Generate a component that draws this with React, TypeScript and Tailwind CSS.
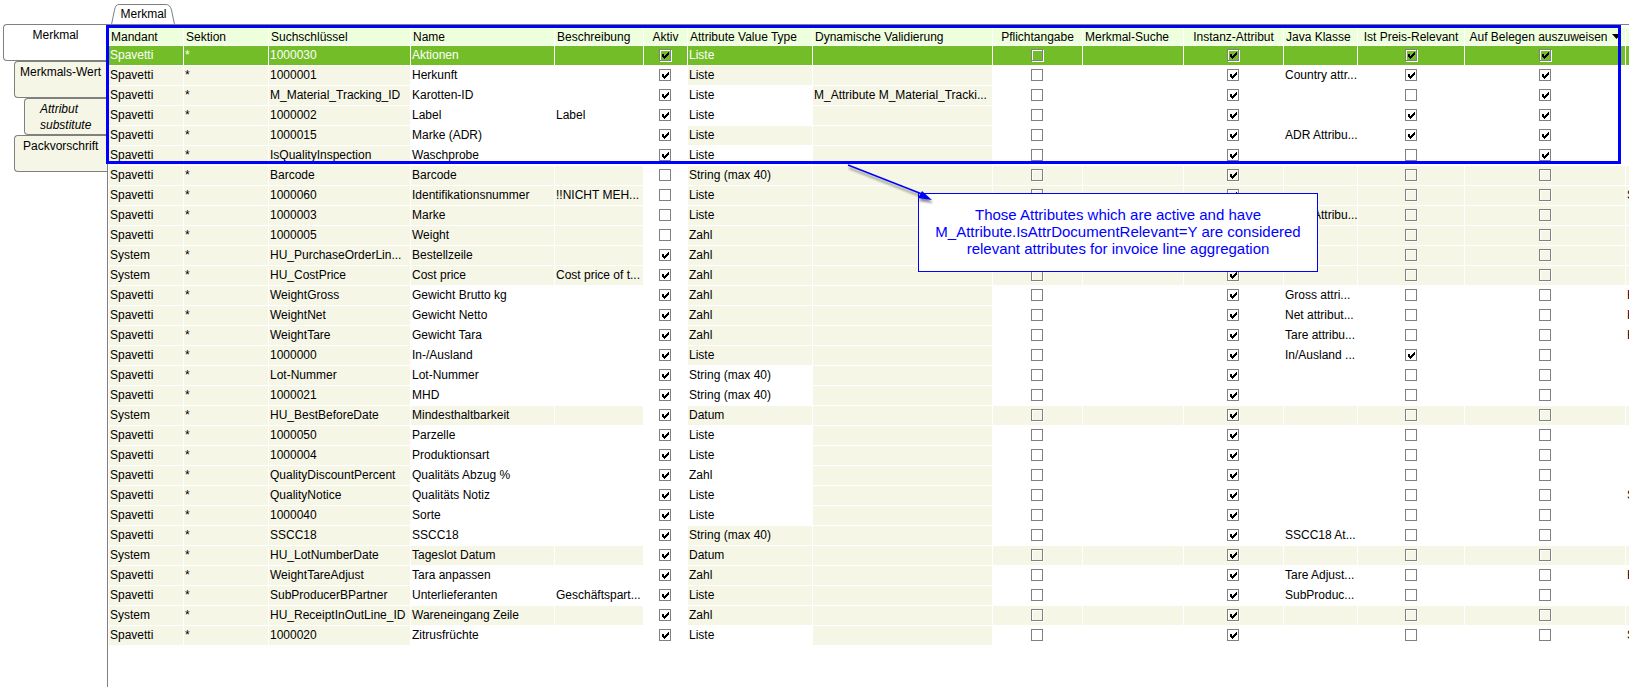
import React from "react";

type Kind = "text" | "check";

interface Column {
  title: string;
  width: string;
  kind: Kind;
  sorted?: boolean;
}

const COLUMNS: Column[] = [
  { title: "Mandant", width: "w-[75px]", kind: "text" },
  { title: "Sektion", width: "w-[85px]", kind: "text" },
  { title: "Suchschlüssel", width: "w-[142px]", kind: "text" },
  { title: "Name", width: "w-[144px]", kind: "text" },
  { title: "Beschreibung", width: "w-[89px]", kind: "text" },
  { title: "Aktiv", width: "w-[44px]", kind: "check" },
  { title: "Attribute Value Type", width: "w-[125px]", kind: "text" },
  { title: "Dynamische Validierung", width: "w-[180px]", kind: "text" },
  { title: "Pflichtangabe", width: "w-[90px]", kind: "check" },
  { title: "Merkmal-Suche", width: "w-[101px]", kind: "text" },
  { title: "Instanz-Attribut", width: "w-[100px]", kind: "check" },
  { title: "Java Klasse", width: "w-[74px]", kind: "text" },
  { title: "Ist Preis-Relevant", width: "w-[107px]", kind: "check" },
  { title: "Auf Belegen auszuweisen", width: "w-[161px]", kind: "check", sorted: true },
  { title: "", width: "w-[75px]", kind: "text" },
];

interface Row {
  client: string;
  key: string;
  name: string;
  type: string;
  desc?: string;
  inactive?: boolean;
  typeOpen?: boolean;
  rule?: string;
  java?: string;
  price?: boolean;
  doc?: boolean;
  unit?: string;
}

const SP = "Spavetti";
const SY = "System";

const ROWS: Row[] = [
  { client: SP, key: "1000030", name: "Aktionen", type: "Liste", price: true, doc: true },
  { client: SP, key: "1000001", name: "Herkunft", type: "Liste", java: "Country attr...", price: true, doc: true },
  { client: SP, key: "M_Material_Tracking_ID", name: "Karotten-ID", type: "Liste", typeOpen: true, rule: "M_Attribute M_Material_Tracki...", doc: true },
  { client: SP, key: "1000002", name: "Label", type: "Liste", typeOpen: true, desc: "Label", price: true, doc: true },
  { client: SP, key: "1000015", name: "Marke (ADR)", type: "Liste", java: "ADR Attribu...", price: true, doc: true },
  { client: SP, key: "IsQualityInspection", name: "Waschprobe", type: "Liste", typeOpen: true, doc: true },
  { client: SP, key: "Barcode", name: "Barcode", type: "String (max 40)", inactive: true },
  { client: SP, key: "1000060", name: "Identifikationsnummer", type: "Liste", desc: "!!NICHT MEH...", inactive: true, unit: "S" },
  { client: SP, key: "1000003", name: "Marke", type: "Liste", java: "ADR Attribu...", inactive: true },
  { client: SP, key: "1000005", name: "Weight", type: "Zahl", inactive: true },
  { client: SY, key: "HU_PurchaseOrderLin...", name: "Bestellzeile", type: "Zahl" },
  { client: SY, key: "HU_CostPrice", name: "Cost price", type: "Zahl", desc: "Cost price of t..." },
  { client: SP, key: "WeightGross", name: "Gewicht Brutto kg", type: "Zahl", java: "Gross attri...", unit: "K" },
  { client: SP, key: "WeightNet", name: "Gewicht Netto", type: "Zahl", java: "Net attribut...", unit: "K" },
  { client: SP, key: "WeightTare", name: "Gewicht Tara", type: "Zahl", java: "Tare attribu...", unit: "K" },
  { client: SP, key: "1000000", name: "In-/Ausland", type: "Liste", java: "In/Ausland ...", price: true },
  { client: SP, key: "Lot-Nummer", name: "Lot-Nummer", type: "String (max 40)", typeOpen: true },
  { client: SP, key: "1000021", name: "MHD", type: "String (max 40)", typeOpen: true },
  { client: SY, key: "HU_BestBeforeDate", name: "Mindesthaltbarkeit", type: "Datum" },
  { client: SP, key: "1000050", name: "Parzelle", type: "Liste", typeOpen: true },
  { client: SP, key: "1000004", name: "Produktionsart", type: "Liste", typeOpen: true },
  { client: SP, key: "QualityDiscountPercent", name: "Qualitäts Abzug %", type: "Zahl", typeOpen: true },
  { client: SP, key: "QualityNotice", name: "Qualitäts Notiz", type: "Liste", typeOpen: true, unit: "S" },
  { client: SP, key: "1000040", name: "Sorte", type: "Liste", typeOpen: true },
  { client: SP, key: "SSCC18", name: "SSCC18", type: "String (max 40)", java: "SSCC18 At..." },
  { client: SY, key: "HU_LotNumberDate", name: "Tageslot Datum", type: "Datum" },
  { client: SP, key: "WeightTareAdjust", name: "Tara anpassen", type: "Zahl", java: "Tare Adjust...", unit: "K" },
  { client: SP, key: "SubProducerBPartner", name: "Unterlieferanten", type: "Liste", desc: "Geschäftspart...", java: "SubProduc..." },
  { client: SY, key: "HU_ReceiptInOutLine_ID", name: "Wareneingang Zeile", type: "Zahl" },
  { client: SP, key: "1000020", name: "Zitrusfrüchte", type: "Liste", typeOpen: true, unit: "S" },
];

function Check({ checked, label }: { checked: boolean; label: string }) {
  return (
    <span className="mx-auto grid size-[13px]">
      <input
        type="checkbox"
        aria-label={label}
        defaultChecked={checked}
        className="peer col-start-1 row-start-1 size-3 appearance-none border border-[#808080] shadow-[1px_1px_0_#fff,inset_1px_1px_0_#fff]"
      />
      <svg
        viewBox="0 0 12 12"
        shapeRendering="crispEdges"
        className="pointer-events-none invisible col-start-1 row-start-1 size-3 peer-checked:visible"
      >
        <path
          d="M9 3h1v1h-1zM8 4h2v1h-2zM3 5h2v1h-2zM7 5h3v1h-3zM3 6h2v1h-2zM6 6h3v1h-3zM3 7h5v1h-5zM4 8h3v1h-3zM5 9h1v1h-1z"
          fill="#000"
        />
      </svg>
    </span>
  );
}

function rowCells(r: Row): (string | boolean)[] {
  return [
    r.client,
    "*",
    r.key,
    r.name,
    r.desc ?? "",
    !r.inactive,
    r.type,
    r.rule ?? "",
    false,
    "",
    true,
    r.java ?? "",
    !!r.price,
    !!r.doc,
    r.unit ?? "",
  ];
}

function cellColor(r: Row, col: number, selected: boolean): string {
  if (selected) return "bg-[#73be28] text-white";
  if (col === 5) return "bg-white";
  if (col <= 2 || col === 7) return "bg-[#f6f6e6]";
  if (col === 6) return r.typeOpen ? "bg-white" : "bg-[#f6f6e6]";
  return r.inactive || r.client === SY ? "bg-[#f6f6e6]" : "bg-white";
}

function AttributeTable() {
  return (
    <table className="w-[1592px] table-fixed border-collapse">
      <colgroup>
        {COLUMNS.map((c, i) => (
          <col key={i} className={c.width} />
        ))}
      </colgroup>
      <thead>
        <tr className="h-[18px]">
          {COLUMNS.map((c, i) => (
            <th key={i} className="p-0 font-normal">
              <div
                className={
                  "mr-px mb-px flex h-[17px] items-start overflow-hidden bg-[#eeffdd] leading-[19px] whitespace-nowrap " +
                  (c.kind === "check" ? "justify-center" : "pl-[2px]")
                }
              >
                {c.title}
                {c.sorted && (
                  <svg viewBox="0 0 9 5" className="mt-[6px] ml-1 h-[5px] w-[9px]">
                    <path d="M0 0h9L4.500 5z" fill="#000" />
                  </svg>
                )}
              </div>
            </th>
          ))}
        </tr>
      </thead>
      <tbody>
        {ROWS.map((r, ri) => (
          <tr key={ri} className="h-5">
            {rowCells(r).map((v, ci) => (
              <td key={ci} className="p-0">
                <div
                  className={
                    "mr-px mb-px h-[19px] overflow-hidden leading-[19px] whitespace-nowrap " +
                    (typeof v === "boolean" ? "flex pt-[3px] " : "pl-px ") +
                    cellColor(r, ci, ri === 0)
                  }
                >
                  {typeof v === "boolean" ? (
                    <Check checked={v} label={`${COLUMNS[ci].title} ${r.name}`} />
                  ) : (
                    v
                  )}
                </div>
              </td>
            ))}
          </tr>
        ))}
      </tbody>
    </table>
  );
}

const SIDE_TABS = [
  { title: "Merkmal", style: "ml-[3px] justify-center bg-white px-2" },
  { title: "Merkmals-Wert", style: "ml-[14px] bg-[#f6f6e6] pl-[5px]" },
  { title: "Attribut substitute", style: "ml-6 bg-[#f6f6e6] pl-[15px] pr-3 italic" },
  { title: "Packvorschrift", style: "ml-[14px] bg-[#f6f6e6] pl-2" },
];

export default function App() {
  return (
    <div className="relative flex min-h-screen overflow-hidden bg-white font-['Liberation_Sans',Arial,sans-serif] text-[12px] text-black">
      <nav className="flex w-[107px] shrink-0 flex-col pt-6">
        {SIDE_TABS.map((t) => (
          <button
            key={t.title}
            type="button"
            className={
              "flex h-[37px] items-start rounded-l-[4px] border border-r-0 border-[#808080] pt-[2px] text-left leading-4 " +
              t.style
            }
          >
            {t.title}
          </button>
        ))}
      </nav>

      <main className="flex min-w-0 flex-1 flex-col">
        <div className="flex h-6 items-end pl-1">
          <button type="button" className="grid h-5 w-[65px] place-items-center">
            <svg viewBox="0 0 65 20" className="col-start-1 row-start-1 h-5 w-[65px]">
              <path
                d="M0.500 20.500L3.500 6Q4.500 0.500 8 0.500H55Q59 0.500 60.500 6L63.500 20.500"
                fill="#fff"
                stroke="#808080"
              />
            </svg>
            <span className="col-start-1 row-start-1 leading-5">Merkmal</span>
          </button>
        </div>
        <div className="flex-1 overflow-hidden border-t border-l border-[#808080] pt-[3px] pl-px">
          <AttributeTable />
        </div>
      </main>

      <div className="pointer-events-none absolute top-[25px] left-[106px] h-[139px] w-[1515px] border-3 border-[#0000ff]" />

      <p className="absolute top-[193px] left-[918px] h-[79px] w-[400px] border border-[#0000ff] bg-white pt-3 text-center text-[15px] leading-[17px] text-[#0000ff]">
        Those Attributes which are active and have
        <br />
        M_Attribute.IsAttrDocumentRelevant=Y are considered
        <br />
        relevant attributes for invoice line aggregation
      </p>

      <svg
        viewBox="0 0 90 42"
        className="pointer-events-none absolute top-[163px] left-[845px] h-[42px] w-[90px] drop-shadow-[1px_3px_1px_rgba(0,0,0,0.45)]"
      >
        <path d="M3 2L77 31" stroke="#0000ff" strokeWidth="1.500" />
        <path d="M87 37L73 35L77 28Z" fill="#0000ff" />
      </svg>
    </div>
  );
}
